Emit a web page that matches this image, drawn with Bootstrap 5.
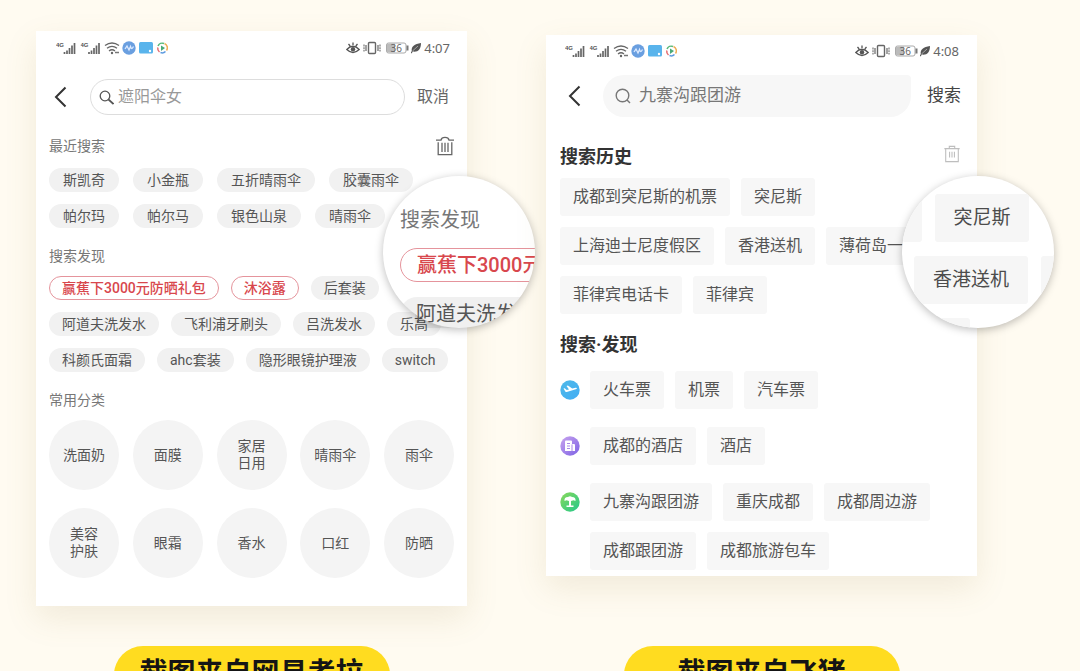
<!DOCTYPE html>
<html lang="zh-CN">
<head>
<meta charset="utf-8">
<meta name="viewport" content="width=device-width, initial-scale=1">
<title>搜索页对比</title>
<link href="https://cdn.jsdelivr.net/npm/bootstrap@5.3.0/dist/css/bootstrap.min.css" rel="stylesheet">
<style>
body { background: #fffbf1; color: #555; font-family: Roboto, "Noto Sans CJK SC", sans-serif; font-size: 14px; }
.board { display: grid; grid-template-columns: 1fr 1fr; column-gap: 79px; row-gap: 40px; padding: 31px 103px 0 36px; align-items: start; align-content: start; }
.phone { background: #fff; box-shadow: 0 12px 30px rgba(150, 120, 60, .13); }
.phone-a { padding: 10px 13px 28px; }
.phone-b { padding: 9px 16px 6px 14px; margin-top: 4px; }
.plain { background: none; border: 0; padding: 0; color: inherit; display: flex; align-items: center; white-space: nowrap; }
.status { height: 14px; padding: 0 4px 0 7px; color: #666; }
.phone-b .status { padding: 0 2px 0 5px; }
.clock { font: 13px/14px "Noto Sans", sans-serif; margin-left: 2px; }
.finder input { background: none; border: 0; outline: 0; padding: 0; min-width: 0; flex: 1; color: #777; }
.finder input::placeholder { color: #999; opacity: 1; }
.phone-a .finder { height: 36px; border: 1px solid #ddd; border-radius: 18px; padding: 0 8px; gap: 4px; margin-left: 23px; margin-right: 12px; font-size: 16px; }
.phone-b .finder { height: 42px; background: #f7f7f7; border-radius: 21px 4px 21px 21px; padding: 0 12px; gap: 8px; margin-left: 22px; margin-right: 16px; font-size: 17px; }
.phone-a .bar { margin-top: 24px; padding: 0 5px; font-size: 16px; color: #666; }
.phone-b .bar { margin-top: 17px; padding-left: 8px; font-size: 17px; color: #444; }
.phone-a h2 { font-size: 14px; line-height: 20px; font-weight: 400; color: #777; margin: 18px 0 10px; }
.phone-b h2 { font-size: 18px; line-height: 24px; font-weight: 700; color: #333; margin: 0; }
.phone-a .recent-head { margin-top: 21px; margin-bottom: 12px; color: #666; }
.phone-a .recent-head h2 { margin: 0; }
.history-head { margin-top: 28px; margin-bottom: 9px; }
.phone-b .discover-head { margin-top: 19px; margin-bottom: 14px; }
.tags { display: flex; flex-wrap: wrap; gap: 12px; }
.tags-wide { column-gap: 14px; }
.pill { height: 24px; border-radius: 12px; border: 1px solid transparent; background: #f1f1f1; padding: 0 12px; font-size: 14px; line-height: 20px; color: #555; white-space: nowrap; }
.tags-wide .pill { padding: 0 13px; }
.pill-hot { background: #fff; border-color: #e5949c; color: #d8474d; font-weight: 500; }
.round { width: 70px; height: 70px; border-radius: 50%; border: 0; background: #f4f4f4; color: #555; font-size: 14px; line-height: 17px; padding: 0 20px; }
.round-3 { padding: 0; }
.cats { display: grid; grid-template-columns: repeat(5, 70px); justify-content: space-between; row-gap: 18px; }
.blocks { display: flex; flex-wrap: wrap; gap: 11px; }
.block { height: 38px; border: 0; border-radius: 3px; background: #f7f7f7; padding: 0 13px; font-size: 16px; line-height: 22px; color: #555; white-space: nowrap; }
.groups { gap: 18px; }
.group { display: flex; gap: 10px; }
.group svg { flex: none; margin-top: 9px; }
.lens { position: absolute; width: 152px; height: 152px; border-radius: 50%; background: #fff; box-shadow: 0 2px 8px rgba(0, 0, 0, .26); font-size: 20px; line-height: 34px; white-space: nowrap; }
.phone-a .lens { top: 145px; right: -68px; }
.phone-b .lens { top: 141px; right: -77px; }
.lens-view { width: 152px; height: 152px; }
.phone-a .lens-view { padding: 27px 0 0 17px; clip-path: path("M0 76A76 76 0 0 1 152 76A76 76 0 0 1 76 152H32V138A76 76 0 0 1 0 76Z"); color: #555; }
.lens-title { color: #777; }
.lens-pill { width: 240px; border-radius: 17px; padding-left: 16px; }
.lens-hot { border: 1px solid #e5949c; line-height: 32px; margin: 11px 0 15px; color: #d8474d; font-weight: 500; }
.lens-grey { background: rgba(0, 0, 0, .06); }
.phone-b .lens-view { overflow: hidden; border-radius: 50%; padding-top: 18px; font-size: 19px; line-height: 48px; color: #4c4c4c; }
.lens-block { background: #f6f6f6; border-radius: 3px; height: 48px; text-align: center; flex: none; }
.w-a { width: 20px; } .w-b { width: 94px; } .w-c { width: 114px; } .w-d { width: 68px; }
.lens-rows { row-gap: 14px; }
.lens-row { gap: 13px; }
.lens-shift { padding-left: 12px; }
.source { background: #ffdc20; color: #151515; border-radius: 29px; height: 58px; line-height: 56px; width: 276px; max-width: 100%; font-size: 28px; font-weight: 700; text-align: center; justify-self: center; margin: 0; }
</style>
<script src="https://cdn.jsdelivr.net/npm/bootstrap@5.3.0/dist/js/bootstrap.bundle.min.js"></script>
</head>
<body>
<svg width="0" height="0" class="position-absolute" aria-hidden="true">
  <defs>
    <linearGradient id="gBlue" x2="1" y2="1"><stop stop-color="#4fb9e8"/><stop offset="1" stop-color="#42adf5"/></linearGradient>
    <linearGradient id="gViolet" x2="1" y2="1"><stop stop-color="#c9a4ef"/><stop offset="1" stop-color="#7d62e4"/></linearGradient>
    <linearGradient id="gGreen" x2="1" y2="1"><stop stop-color="#8bd95a"/><stop offset="1" stop-color="#22c88c"/></linearGradient>
    <symbol id="signal" viewBox="0 0 21 14">
      <text x="0" y="6" font-family="Liberation Sans, sans-serif" font-size="6" font-weight="700" fill="#555">4G</text>
      <path d="M8.500 13v-2M11 13V9.500M13.500 13V7M16 13V4.500M18.500 13V2" stroke="#666" stroke-width="1.700"/>
    </symbol>
    <symbol id="left-status" viewBox="0 0 112 14">
      <use href="#signal" width="21" height="14"/>
      <use href="#signal" x="24.500" width="21" height="14"/>
      <g fill="none" stroke="#666" stroke-width="1.300"><path d="M49 4.500q7-5 14 0M51 7.300q5-4 10 0M53 10q3-2.500 6 0"/></g>
      <circle cx="56" cy="12" r="1.200" fill="#666"/><path d="M59 11.500h4" stroke="#777" stroke-width="1.500"/>
      <circle cx="73" cy="7" r="6.700" fill="#6a9fe0"/><path d="M69 8l2-3 2 4 1.500-3.500q1 4 3 0" fill="none" stroke="#dceaff" stroke-width="1.300"/>
      <rect x="83" y="1" width="14" height="11.500" rx="1.500" fill="#59b4ec"/><circle cx="94" cy="10" r="1.200" fill="#fff"/>
      <g fill="none" stroke-width="1.500"><path d="M102 5a4.700 4.700 0 0 1 6-2.500" stroke="#58b878"/><path d="M108.500 2.500a4.700 4.700 0 0 1 2 7" stroke="#efae55"/><path d="M109.500 10.500a4.700 4.700 0 0 1-5 1" stroke="#5d9be0"/><path d="M103.500 11a4.700 4.700 0 0 1-1.700-4.500" stroke="#e4656a"/></g>
      <path d="M105 4.500l4 2.500-4 3z" fill="#4aaa78"/>
    </symbol>
    <symbol id="right-status" viewBox="0 0 76 14">
      <path d="M.8 8.500q6-6.500 12.400 0q-6.200 6-12.400 0zM7 1.500v2.500M2.500 3l1.700 2M11.500 3L9.800 5" fill="none" stroke="#555" stroke-width="1.300"/>
      <circle cx="7" cy="8.300" r="2.200" fill="#555"/>
      <rect x="22.500" y="1.500" width="7" height="11" rx="1" fill="none" stroke="#666" stroke-width="1.400"/>
      <path d="M20 4v6M32 4v6" stroke="#666" stroke-width="1.200"/><path d="M18 3.500v7M34 3.500v7" stroke="#777" stroke-width="1.200" stroke-dasharray="2 .8"/>
      <rect x="40.500" y="2" width="19.500" height="10" rx="2" fill="#fff" stroke="#aaa"/><path d="M41 2.500h8v9h-8z" fill="#bbb"/>
      <path d="M61.500 4.500v5" stroke="#777" stroke-width="2"/>
      <text x="44.500" y="10.700" font-family="Noto Sans, sans-serif" font-size="10" fill="#666">36</text>
      <path d="M65 12c0-1 .5-1.500.8-2C65 5.500 68.500 3 75 2c0 6-3 9.500-8.200 8.600L65.600 12.500z" fill="#555"/><path d="M66.500 10L72 5" stroke="#ddd" stroke-width=".6"/>
    </symbol>
    <symbol id="back" viewBox="0 0 13 22"><path d="M11.500 1.500L2 11l9.500 9.500" fill="none" stroke="#333" stroke-width="2"/></symbol>
    <symbol id="trash" viewBox="0 0 18 22"><path d="M0 4.500h5Q5.500 1.500 9 1.500T13 4.500h5M2.200 7v13.500h13.600V7M6 7.500v10M9 7.500v10M12 7.500v10" fill="none" stroke="currentColor" stroke-width="1.300"/></symbol>
    <symbol id="trash-box" viewBox="0 0 18 20"><path d="M.5 4h17M6 4V1.500h6V4M2 4v14.500h14V4M6.300 7.500V14M9 7.500V14M11.700 7.500V14" fill="none" stroke="currentColor" stroke-width="1.200"/></symbol>
  </defs>
</svg>

<main class="board vh-100 overflow-hidden">
  <section class="phone phone-a position-relative">
    <div class="status d-flex align-items-center justify-content-between">
      <svg width="112" height="14" aria-hidden="true"><use href="#left-status"/></svg>
      <div class="d-flex align-items-center"><svg width="76" height="14" aria-hidden="true"><use href="#right-status"/></svg><span class="clock">4:07</span></div>
    </div>
    <div class="bar d-flex align-items-center">
      <button class="plain" aria-label="返回"><svg width="13" height="22"><use href="#back"/></svg></button>
      <label class="finder d-flex align-items-center flex-grow-1">
        <svg width="15" height="15" viewBox="0 0 15 15" fill="none" stroke="#555"><circle cx="6" cy="6" r="4.800" stroke-width="1.300"/><path d="M9.500 9.500l5 4.500" stroke-width="1.700"/></svg>
        <input type="search" placeholder="遮阳伞女" aria-label="搜索">
      </label>
      <button class="plain">取消</button>
    </div>
    <div class="recent-head d-flex align-items-center justify-content-between">
      <h2>最近搜索</h2>
      <button class="plain" aria-label="清空"><svg width="18" height="20" viewBox="0 0 18 22" preserveAspectRatio="none"><use href="#trash" width="18" height="22"/></svg></button>
    </div>
    <div class="tags tags-wide">
      <button class="pill">斯凯奇</button><button class="pill">小金瓶</button><button class="pill">五折晴雨伞</button><button class="pill">胶囊雨伞</button>
      <button class="pill">帕尔玛</button><button class="pill">帕尔马</button><button class="pill">银色山泉</button><button class="pill">晴雨伞</button>
    </div>
    <h2>搜索发现</h2>
    <div class="tags">
      <button class="pill pill-hot">赢蕉下3000元防晒礼包</button><button class="pill pill-hot">沐浴露</button><button class="pill">后套装</button>
      <button class="pill">阿道夫洗发水</button><button class="pill">飞利浦牙刷头</button><button class="pill">吕洗发水</button><button class="pill">乐高</button>
      <button class="pill">科颜氏面霜</button><button class="pill">ahc套装</button><button class="pill">隐形眼镜护理液</button><button class="pill">switch</button>
    </div>
    <h2>常用分类</h2>
    <div class="cats">
      <button class="round round-3">洗面奶</button><button class="round">面膜</button><button class="round">家居日用</button><button class="round round-3">晴雨伞</button><button class="round">雨伞</button>
      <button class="round">美容护肤</button><button class="round">眼霜</button><button class="round">香水</button><button class="round">口红</button><button class="round">防晒</button>
    </div>
    <div class="lens">
      <div class="lens-view">
        <div class="lens-title">搜索发现</div>
        <div class="lens-pill lens-hot">赢蕉下3000元</div>
        <div class="lens-pill lens-grey">阿道夫洗发水</div>
      </div>
    </div>
  </section>

  <section class="phone phone-b position-relative">
    <div class="status d-flex align-items-center justify-content-between">
      <svg width="112" height="14" aria-hidden="true"><use href="#left-status"/></svg>
      <div class="d-flex align-items-center"><svg width="76" height="14" aria-hidden="true"><use href="#right-status"/></svg><span class="clock">4:08</span></div>
    </div>
    <div class="bar d-flex align-items-center">
      <button class="plain" aria-label="返回"><svg width="13" height="22"><use href="#back"/></svg></button>
      <label class="finder d-flex align-items-center flex-grow-1">
        <svg width="16" height="16" viewBox="0 0 16 16" fill="none" stroke="#777" stroke-width="1.400"><circle cx="7.500" cy="7.500" r="6.300"/><path d="M12 12l3 3"/></svg>
        <input type="search" value="九寨沟跟团游" aria-label="搜索">
      </label>
      <button class="plain">搜索</button>
    </div>
    <div class="history-head d-flex align-items-start justify-content-between">
      <h2>搜索历史</h2>
      <button class="plain text-black-50 opacity-50" aria-label="清空"><svg width="18" height="18"><use href="#trash-box"/></svg></button>
    </div>
    <div class="blocks">
      <button class="block">成都到突尼斯的机票</button><button class="block">突尼斯</button>
      <button class="block">上海迪士尼度假区</button><button class="block">香港送机</button><button class="block">薄荷岛一</button>
      <button class="block">菲律宾电话卡</button><button class="block">菲律宾</button>
    </div>
    <h2 class="discover-head">搜索·发现</h2>
    <div class="d-grid groups">
      <div class="group">
        <svg width="20" height="20" viewBox="0 0 20 20"><circle cx="10" cy="10" r="9.700" fill="url(#gBlue)"/><path d="M3.500 8.500l1.200-.3 2 1.800 2.300-.6L6.500 6l1.400-.4 4.300 3 3.300-.9q1.500-.2 1.500.6-.1.700-1.200 1l-9 2.700q-1 .2-1.500-.5z" fill="#fff"/></svg>
        <div class="blocks"><button class="block">火车票</button><button class="block">机票</button><button class="block">汽车票</button></div>
      </div>
      <div class="group">
        <svg width="20" height="20" viewBox="0 0 20 20"><circle cx="10" cy="10" r="9.700" fill="url(#gViolet)"/><path d="M5 5.500q0-1 1-1h5q1 0 1 1V8h2q1 0 1 1v6H5z" fill="#fff"/><path d="M7 7.500h3M7 10h3M7 12.500h3M12 8.500V15" stroke="#a98ae8"/></svg>
        <div class="blocks"><button class="block">成都的酒店</button><button class="block">酒店</button></div>
      </div>
      <div class="group">
        <svg width="20" height="20" viewBox="0 0 20 20"><circle cx="10" cy="10" r="9.700" fill="url(#gGreen)"/><path d="M4.500 9Q4 5 8 5q2-1.500 4 0 4 0 3.500 4l-2-.8-2.500.8v4.500h2.500V15h-7v-1.500H9V9l-2.500-.8z" fill="#fff"/></svg>
        <div class="blocks"><button class="block">九寨沟跟团游</button><button class="block">重庆成都</button><button class="block">成都周边游</button><button class="block">成都跟团游</button><button class="block">成都旅游包车</button></div>
      </div>
    </div>
    <div class="lens">
      <div class="lens-view d-grid align-content-start lens-rows">
        <div class="d-flex lens-row"><span class="lens-block w-a"></span><span class="lens-block w-b">突尼斯</span></div>
        <div class="d-flex lens-row lens-shift"><span class="lens-block w-c">香港送机</span><span class="lens-block w-a"></span></div>
        <div class="d-flex"><span class="lens-block w-d"></span></div>
      </div>
    </div>
  </section>

  <p class="source">截图来自网易考拉</p>
  <p class="source">截图来自飞猪</p>
</main>
</body>
</html>
